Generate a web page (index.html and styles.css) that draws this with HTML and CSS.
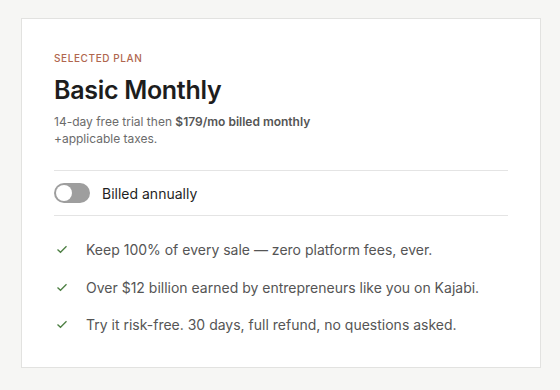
FILE: index.html
```html
<!DOCTYPE html>
<html lang="en">
<head>
    <meta charset="UTF-8">
    <title>Selected plan</title>
    <link rel="stylesheet" href="styles.css">
</head>
<body>
    <div class="plan-card">
        <div class="plan-label">SELECTED PLAN</div>
        <h1 class="plan-name">Basic Monthly</h1>
        <p class="plan-terms">14-day free trial then <strong>$179/mo billed monthly</strong><br>+applicable taxes.</p>
        <div class="billing-row">
            <span class="toggle"><span class="toggle-knob"></span></span>
            <span class="billing-label">Billed annually</span>
        </div>
        <ul class="perks">
            <li>
                <svg class="check" viewBox="0 0 12 9" width="12" height="9"><path d="M1.5 4.5 L4.5 7.3 L10.5 1.2" fill="none" stroke="#4d7f43" stroke-width="1.3"/></svg>
                Keep 100% of every sale — zero platform fees, ever.
            </li>
            <li>
                <svg class="check" viewBox="0 0 12 9" width="12" height="9"><path d="M1.5 4.5 L4.5 7.3 L10.5 1.2" fill="none" stroke="#4d7f43" stroke-width="1.3"/></svg>
                Over $12 billion earned by entrepreneurs like you on Kajabi.
            </li>
            <li>
                <svg class="check" viewBox="0 0 12 9" width="12" height="9"><path d="M1.5 4.5 L4.5 7.3 L10.5 1.2" fill="none" stroke="#4d7f43" stroke-width="1.3"/></svg>
                Try it risk-free. 30 days, full refund, no questions asked.
            </li>
        </ul>
    </div>
</body>
</html>
```

FILE: styles.css
```css
body {
    margin: 0;
    padding: 18px 19px 0 21px;
    background-color: #f6f6f4;
    font-family: Inter, "Noto Sans", sans-serif;
    color: #1f1f1f;
}
.plan-card {
    width: 454px;
    background-color: #fff;
    border: 1px solid #e2e2e0;
    padding: 32px 32px 23px 32px;
}
.plan-label {
    font-size: 10px;
    line-height: 14px;
    font-weight: 500;
    letter-spacing: 0.6px;
    color: #b0664e;
}
.plan-name {
    margin: 9px 0 0 0;
    font-size: 25px;
    line-height: 32px;
    font-weight: 600;
    letter-spacing: -0.3px;
    color: #1d1d1d;
}
.plan-terms {
    margin: 7px 0 0 0;
    font-size: 12px;
    line-height: 17px;
    color: #6b6b6b;
}
.plan-terms strong {
    font-weight: 600;
    color: #555;
}
.billing-row {
    display: flex;
    align-items: center;
    gap: 12px;
    margin-top: 23px;
    padding: 12px 0;
    border-top: 1px solid #e4e4e4;
    border-bottom: 1px solid #e4e4e4;
}
.toggle {
    width: 36px;
    height: 20px;
    border-radius: 10px;
    background-color: #9e9e9e;
    display: flex;
    align-items: center;
    padding: 0 2px;
    box-sizing: border-box;
}
.toggle-knob {
    width: 16px;
    height: 16px;
    border-radius: 50%;
    background-color: #fff;
}
.billing-label {
    font-size: 14px;
    color: #1f1f1f;
}
.perks {
    list-style: none;
    margin: 0;
    padding: 15px 0 0 0;
}
.perks li {
    display: flex;
    align-items: center;
    gap: 18px;
    height: 37.5px;
    padding-left: 2px;
    font-size: 14px;
    color: #555;
}
.check {
    flex-shrink: 0;
}
```
